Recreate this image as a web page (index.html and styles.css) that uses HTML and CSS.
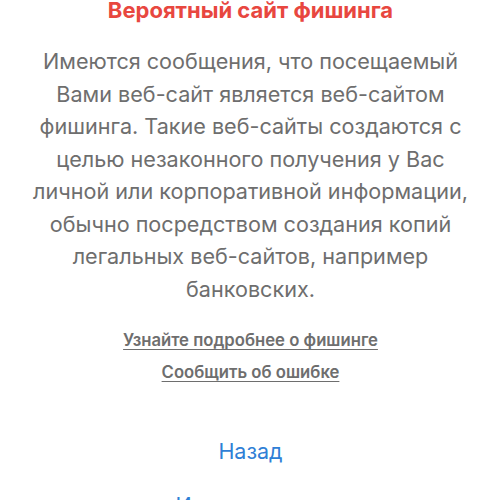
FILE: index.html
```html
<!DOCTYPE html>
<html lang="ru">
<head>
<meta charset="utf-8">
<link rel="stylesheet" href="styles.css">
</head>
<body>
<main class="warning">
  <h1 class="title">Вероятный сайт фишинга</h1>
  <p class="message">Имеются сообщения, что посещаемый Вами веб-сайт является веб-сайтом фишинга. Такие веб-сайты создаются с целью незаконного получения у Вас личной или корпоративной информации, обычно посредством создания копий легальных веб-сайтов, например банковских.</p>
  <div class="links">
    <a class="link" href="#">Узнайте подробнее о фишинге</a>
    <a class="link" href="#">Сообщить об ошибке</a>
  </div>
  <div class="actions">
    <a class="action" href="#">Назад</a>
    <a class="action" href="#">Игнорировать</a>
  </div>
</main>
</body>
</html>
```
FILE: styles.css
```css
html, body {
  margin: 0;
  padding: 0;
  background: #ffffff;
}
body {
  font-family: Inter, "Noto Sans", sans-serif;
  overflow: hidden;
  height: 500px;
}
.warning {
  display: flex;
  flex-direction: column;
  align-items: center;
  text-align: center;
}
.title {
  margin: 0;
  font-size: 22px;
  line-height: 20px;
  font-weight: 700;
  color: #e8473f;
}
.message {
  margin: 25px 0 0;
  width: 450px;
  font-size: 21.6px;
  line-height: 32.5px;
  color: #6e6e6e;
}
.links {
  margin-top: 25px;
  display: flex;
  flex-direction: column;
  align-items: center;
  gap: 12px;
}
.link {
  font-size: 16.7px;
  line-height: 20px;
  font-weight: 600;
  color: #6e6e6e;
  text-decoration: underline;
  text-underline-offset: 3px;
}
.actions {
  margin-top: 57px;
  display: flex;
  flex-direction: column;
  align-items: center;
  gap: 30px;
}
.action {
  font-size: 21.5px;
  line-height: 24px;
  color: #2f7fd6;
  text-decoration: none;
}
```
